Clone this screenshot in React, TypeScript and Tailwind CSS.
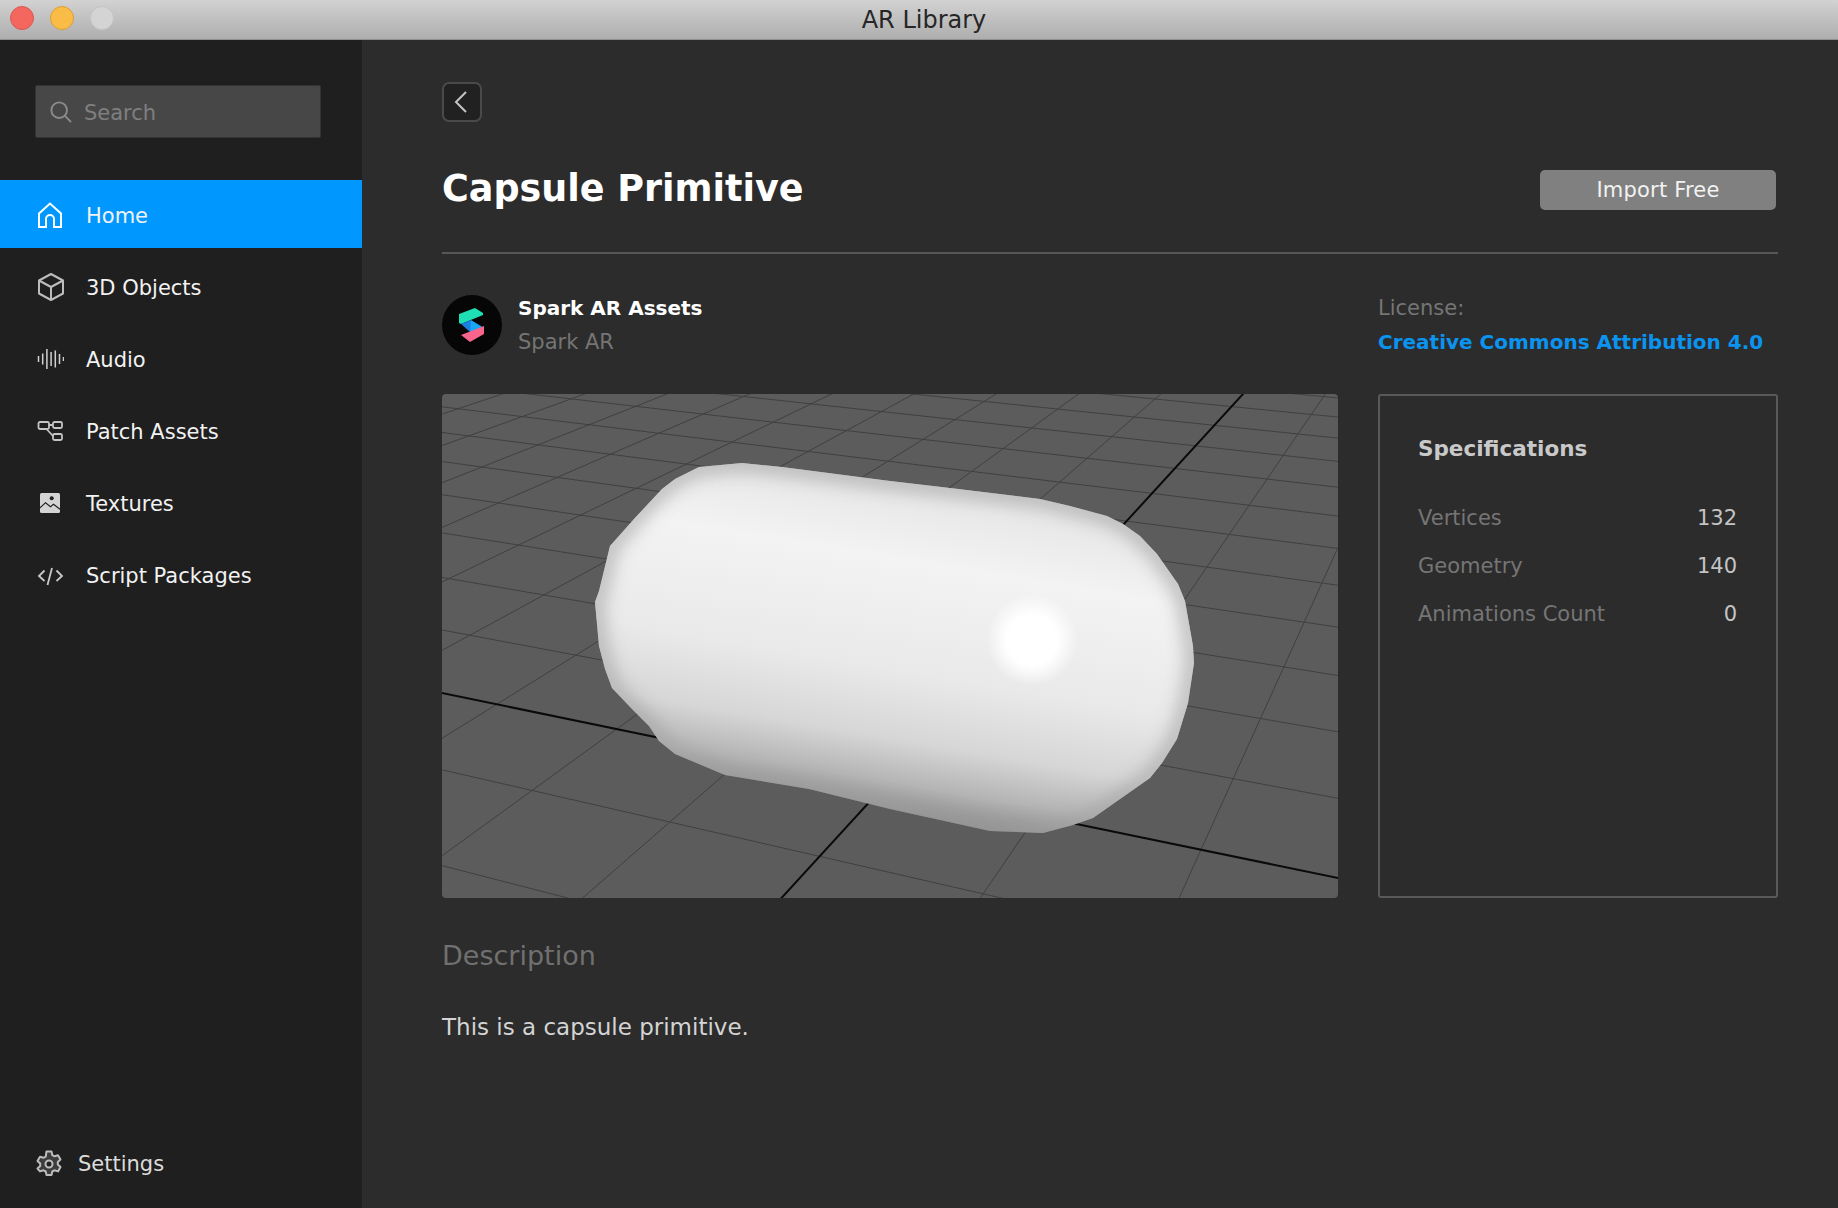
import React from "react";

const FONT = "font-['DejaVu_Sans',sans-serif]";

const VP_A = [1127, -356];
const VP_B = [-3385, -400];
const O = [443.7, 390.6];
const UK = 0.0833;
const pointOnA = (u: number) => {
  const k = u * UK;
  return [(O[0] + k * 1167) / (1 + k), (O[1] - k * 400) / (1 + k)];
};
const through = (vp: number[], p: number[]) => {
  const t = 40;
  return { x1: vp[0], y1: vp[1], x2: vp[0] + (p[0] - vp[0]) * t, y2: vp[1] + (p[1] - vp[1]) * t };
};
const range = (a: number, b: number) => Array.from({ length: b - a + 1 }, (_, i) => a + i);

const CAPSULE =
  "153,208 157,197 168,152 192,125 220,95 233,85 257,73 300,69 340,73 448,87 508,94 598,105 628,112 665,122 681,130 698,142 715,160 736,190 743,207 751,252 752,269 746,309 735,345 720,369 708,384 651,424 631,431 601,439 548,437 448,415 367,395 283,381 233,360 217,347 207,332 190,315 170,294 163,275 157,252";

function Scene() {
  return (
    <svg viewBox="0 0 896 504" className="block w-full h-full">
      <defs>
        <linearGradient id="body" gradientUnits="userSpaceOnUse" x1="480" y1="85" x2="425" y2="415">
          <stop offset="0" stopColor="#e4e4e4" />
          <stop offset="0.25" stopColor="#f3f3f3" />
          <stop offset="0.58" stopColor="#e9e9e9" />
          <stop offset="0.78" stopColor="#d6d6d6" />
          <stop offset="0.91" stopColor="#b4b4b4" />
          <stop offset="1" stopColor="#8c8c8c" />
        </linearGradient>
        <radialGradient id="spot">
          <stop offset="0" stopColor="#ffffff" />
          <stop offset="0.55" stopColor="#ffffff" />
          <stop offset="1" stopColor="#ffffff" stopOpacity="0" />
        </radialGradient>
        <filter id="soft" x="-20%" y="-20%" width="140%" height="140%">
          <feGaussianBlur stdDeviation="9" />
        </filter>
        <clipPath id="cap">
          <polygon points={CAPSULE} />
        </clipPath>
      </defs>
      <rect width="896" height="504" fill="#5c5c5c" />
      {range(-2, 14).map((u) =>
        u === 0 ? null : <line key={`u${u}`} {...through(VP_B, pointOnA(u))} stroke="#404040" strokeWidth="1" />,
      )}
      {range(-6, 44).map((v) =>
        v === 0 ? null : <line key={`v${v}`} {...through(VP_A, [801 - 82.3 * v, 0])} stroke="#404040" strokeWidth="1" />,
      )}
      <line {...through(VP_B, pointOnA(0))} stroke="#0a0a0a" strokeWidth="2" />
      <line {...through(VP_A, [801, 0])} stroke="#0a0a0a" strokeWidth="2" />
      <g clipPath="url(#cap)">
        <rect width="896" height="504" fill="url(#body)" />
        <polygon points={CAPSULE} fill="none" stroke="#a0a0a0" strokeWidth="14" opacity="0.8" filter="url(#soft)" />
        <ellipse cx="590" cy="246" rx="46" ry="46" fill="url(#spot)" />
      </g>
    </svg>
  );
}

const ic = "w-[28px] h-[28px] shrink-0 fill-none stroke-current";

const icons: Record<string, React.ReactNode> = {
  home: (
    <svg viewBox="0 0 28 28" className={`${ic} text-white`} strokeWidth="2">
      <path d="M3 26V12.5L14 2.5l11 10V26h-7v-8a3.500 3.500 0 0 0-8 0v8z" />
    </svg>
  ),
  box: (
    <svg viewBox="0 0 28 28" className={`${ic} text-[#bdbdbd] fill-[#3a3a3a]`} strokeWidth="2" strokeLinejoin="round">
      <path d="M15 1 27 7.500v13L15 27 3 20.500v-13z" />
      <path d="M3 7.500 15 14l12-6.500M15 14v13" />
    </svg>
  ),
  audio: (
    <svg viewBox="0 0 28 28" className={`${ic} text-[#d0d0d0]`} strokeWidth="1.5">
      <path d="M2.500 11v6M6.700 8.500v11M10.900 4v20M15.100 7v14M19.300 5.500v17M23.500 9v10M27.500 12v4" />
    </svg>
  ),
  patch: (
    <svg viewBox="0 0 28 28" className={`${ic} text-[#c4c4c4]`} strokeWidth="1.8">
      <rect x="2.500" y="5" width="10.500" height="7" rx="1.500" />
      <rect x="17" y="5" width="9" height="6" rx="1.500" />
      <rect x="17" y="17" width="9" height="6" rx="1.500" />
      <path d="M13 8h4M10.500 12l6.500 7" />
    </svg>
  ),
  image: (
    <svg viewBox="0 0 28 28" className="w-[28px] h-[28px] shrink-0">
      <rect x="4" y="4" width="20" height="20" rx="1.500" fill="#d4d4d4" />
      <circle cx="15.700" cy="9.300" r="2" fill="#1f1f1f" />
      <path d="M4 18l5.500-5 5 4 3-2.500 6.500 5v1.500l-6.500-5-3 2.500-5-4L4 19.500z" fill="#1f1f1f" />
    </svg>
  ),
  code: (
    <svg viewBox="0 0 28 28" className={`${ic} text-[#c8c8c8]`} strokeWidth="1.8">
      <path d="M8.500 9.500 3 15l5.500 5M20.500 9.500 26 15l-5.500 5M16 7l-4.500 17" />
    </svg>
  ),
};

function NavItem({ icon, label, active }: { icon: string; label: string; active?: boolean }) {
  return (
    <div className={`flex h-[68px] items-center pl-[36px] ${active ? "bg-[#0098ff]" : ""}`}>
      <span className="flex w-[50px] items-center pt-[2px]">{icons[icon]}</span>
      <span className="pt-[4px] text-[21px] leading-none text-[#f2f2f2]">{label}</span>
    </div>
  );
}

function Spec({ k, v }: { k: string; v: string }) {
  return (
    <div className="flex h-[48px] items-center justify-between text-[21px]">
      <span className="text-[#757575]">{k}</span>
      <span className="text-[#c4c4c4]">{v}</span>
    </div>
  );
}

export default function App() {
  return (
    <div className={`flex h-[1208px] w-[1838px] flex-col overflow-hidden bg-[#2c2c2c] ${FONT}`}>
      <header className="relative flex h-[40px] shrink-0 items-center justify-center border-b border-[#8f8f8f] bg-gradient-to-b from-[#d2d2d2] to-[#aeaeae]">
        <div className="absolute left-[10px] top-[6px] flex gap-[16px]">
          <span className="h-[24px] w-[24px] rounded-full border border-[#d8584f] bg-[#f4675f]" />
          <span className="h-[24px] w-[24px] rounded-full border border-[#dc9f36] bg-[#f9bc46]" />
          <span className="h-[24px] w-[24px] rounded-full border border-[#c4c4c4] bg-[#d4d4d4]" />
        </div>
        <span className="ml-[10px] text-[24px] leading-none text-[#262626]">AR Library</span>
      </header>
      <div className="flex min-h-0 flex-1">
        <aside className="flex w-[362px] shrink-0 flex-col bg-[#1f1f1f]">
          <div className="ml-[35px] mt-[45px] flex h-[53px] w-[286px] items-center gap-[12px] rounded-[2px] border border-[#333333] bg-[#474747] pl-[14px]">
            <svg viewBox="0 0 24 24" className="h-[22px] w-[22px] fill-none stroke-[#8c8c8c]" strokeWidth="2">
              <circle cx="10" cy="10" r="8.500" />
              <path d="m16 16 7 7" />
            </svg>
            <span className="pt-[4px] text-[21px] leading-none text-[#7f7f7f]">Search</span>
          </div>
          <nav className="mt-[42px] flex flex-col gap-[4px]">
            <NavItem icon="home" label="Home" active />
            <NavItem icon="box" label="3D Objects" />
            <NavItem icon="audio" label="Audio" />
            <NavItem icon="patch" label="Patch Assets" />
            <NavItem icon="image" label="Textures" />
            <NavItem icon="code" label="Script Packages" />
          </nav>
          <div className="mt-auto mb-[30px] flex items-center gap-[15px] pl-[35px]">
            <svg viewBox="0 0 28 28" className="h-[28px] w-[28px] fill-[#3d3d3d] stroke-[#bdbdbd]" strokeWidth="2" strokeLinejoin="round">
              <path d="M11.500 1.500h5l.8 3.600 2.200 1.200 3.500-1.100 2.500 4.300-2.700 2.500v2.600l2.700 2.500-2.500 4.300-3.500-1.100-2.200 1.200-.8 3.600h-5l-.8-3.600-2.200-1.200-3.500 1.100L2.500 18.600l2.700-2.500v-2.600L2.500 11l2.500-4.300 3.500 1.100 2.200-1.200z" />
              <circle cx="14" cy="14" r="3.500" fill="#1f1f1f" />
            </svg>
            <span className="text-[21px] leading-none text-[#dcdcdc]">Settings</span>
          </div>
        </aside>
        <main className="min-w-0 flex-1 pl-[80px] pr-[60px] pt-[42px]">
          <button className="flex h-[40px] w-[40px] items-center justify-center rounded-[7px] border-2 border-[#4a4a4a] bg-[#212121]">
            <svg viewBox="0 0 24 24" className="h-[24px] w-[24px] fill-none stroke-[#c4c4c4]" strokeWidth="2">
              <path d="M16 2 6 12l10 10" />
            </svg>
          </button>
          <div className="mt-[48px] flex h-[40px] items-center justify-between">
            <h1 className="pb-[1px] text-[36.5px] font-bold leading-none text-white">Capsule Primitive</h1>
            <div className="mr-[2px] flex h-[40px] w-[236px] items-center justify-center rounded-[5px] bg-[#808080] text-[21px] leading-none tracking-[0.2px] text-[#f2f2f2]">
              Import Free
            </div>
          </div>
          <div className="mt-[42px] h-[2px] bg-[#575757]" />
          <div className="mt-[41px] flex h-[60px] items-center">
            <svg viewBox="0 0 60 60" className="h-[60px] w-[60px] shrink-0">
              <circle cx="30" cy="30" r="30" fill="#060606" />
              <path d="M17 19 33 13l8 5v2L19 29l-2-1z" fill="#1fe0b4" />
              <path d="M19 29 29 25v12h-1z" fill="#1a7fe0" />
              <path d="M29 25l13 8-14 4z" fill="#18a6f5" />
              <path d="M19 40 42 31v8l-14 8z" fill="#f8648c" />
            </svg>
            <div className="ml-[16px] flex flex-col gap-[13px]">
              <span className="text-[20px] font-bold leading-[21px] text-white">Spark AR Assets</span>
              <span className="text-[21px] leading-none text-[#757575]">Spark AR</span>
            </div>
            <div className="ml-auto flex w-[400px] flex-col gap-[13px]">
              <span className="text-[21px] leading-none text-[#757575]">License:</span>
              <span className="whitespace-nowrap text-[20px] font-bold leading-[21px] text-[#0a94f0]">Creative Commons Attribution 4.0</span>
            </div>
          </div>
          <div className="mt-[39px] flex h-[504px] gap-[40px]">
            <div className="w-[896px] shrink-0 overflow-hidden rounded-[4px]">
              <Scene />
            </div>
            <div className="w-[400px] shrink-0 rounded-[3px] border-2 border-[#595959] pl-[38px] pr-[39px] pt-[42px]">
              <h2 className="mb-[35px] text-[21.5px] font-bold leading-none text-[#c9c9c9]">Specifications</h2>
              <Spec k="Vertices" v="132" />
              <Spec k="Geometry" v="140" />
              <Spec k="Animations Count" v="0" />
            </div>
          </div>
          <h3 className="mt-[44px] text-[27px] leading-none text-[#707070]">Description</h3>
          <p className="mt-[47px] text-[23px] leading-none text-[#d4d4d4]">This is a capsule primitive.</p>
        </main>
      </div>
    </div>
  );
}
